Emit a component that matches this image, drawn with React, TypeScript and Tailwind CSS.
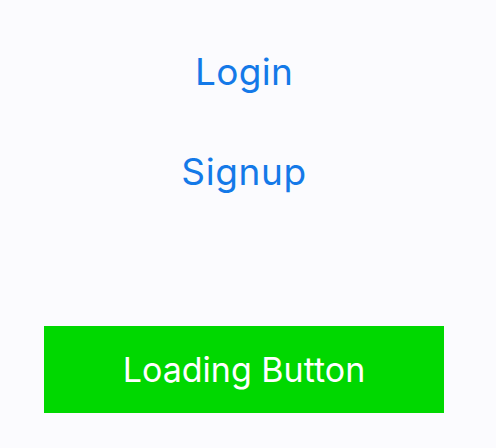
export default function App() {
  return (
    <div className="w-[496px] h-[448px] bg-[#fbfbfe] flex flex-col" style={{ fontFamily: "Inter, Roboto, sans-serif" }}>
      <div className="w-[488px] flex flex-col items-center">
        <div className="h-[52px] mt-[45px] flex items-center text-[37px] tracking-[0.3px] text-[#1479e8] leading-none">Login</div>
        <div className="h-[52px] mt-[48px] flex items-center text-[37px] tracking-[0.6px] text-[#1479e8] leading-none">Signup</div>
        <div className="mt-[129px] w-[400px] h-[87px] bg-[#00d800] flex items-center justify-center text-[34px] text-white leading-none">Loading Button</div>
      </div>
    </div>
  );
}
